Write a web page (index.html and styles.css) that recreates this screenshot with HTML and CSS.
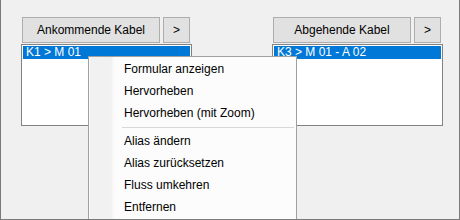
FILE: index.html
```html
<!DOCTYPE html>
<html lang="de">

<head>
    <meta charset="UTF-8" />
    <title>Kabel</title>
    <link rel="stylesheet" href="styles.css">
</head>

<body>
    <div class="fenster">
        <div class="spalten">
            <!-- Eingang -->
            <div class="spalte">
                <div class="kopf">
                    <button class="btn btn-titel">Ankommende Kabel</button>
                    <button class="btn btn-pfeil">&gt;</button>
                </div>
                <div class="liste">
                    <div class="eintrag ausgewaehlt">K1 &gt; M 01</div>
                </div>
            </div>

            <!-- Ausgang -->
            <div class="spalte">
                <div class="kopf">
                    <button class="btn btn-titel">Abgehende Kabel</button>
                    <button class="btn btn-pfeil">&gt;</button>
                </div>
                <div class="liste">
                    <div class="eintrag ausgewaehlt">K3 &gt; M 01 - A 02</div>
                </div>
            </div>
        </div>

        <!-- Kontextmenü -->
        <div class="menue">
            <div class="menue-punkt">Formular anzeigen</div>
            <div class="menue-punkt">Hervorheben</div>
            <div class="menue-punkt">Hervorheben (mit Zoom)</div>
            <div class="menue-trenner"></div>
            <div class="menue-punkt">Alias ändern</div>
            <div class="menue-punkt">Alias zurücksetzen</div>
            <div class="menue-punkt">Fluss umkehren</div>
            <div class="menue-punkt">Entfernen</div>
        </div>
    </div>
</body>

</html>
```

FILE: styles.css
```css
html,
body {
    margin: 0;
    padding: 0;
}

body {
    font-family: "Liberation Sans", Arial, sans-serif;
    font-size: 12px;
    color: #000;
}

.fenster {
    position: relative;
    box-sizing: border-box;
    width: 460px;
    height: 220px;
    background: #f0f0f0;
    border: 1px solid #7a7a7a;
    border-top: none;
    overflow: hidden;
}

.spalten {
    display: flex;
    gap: 80px;
    padding: 17px 0 0 20px;
}

.spalte {
    width: 171px;
}

.kopf {
    display: flex;
    gap: 3px;
    padding-left: 1px;
    margin-bottom: 1px;
}

.btn {
    box-sizing: border-box;
    height: 26px;
    background: #e1e1e1;
    border: 1px solid #adadad;
    font-family: inherit;
    font-size: 12px;
    color: #000;
    padding: 0;
}

.btn-titel {
    width: 138px;
}

.btn-pfeil {
    width: 27px;
}

.liste {
    box-sizing: border-box;
    height: 82px;
    background: #fff;
    border: 1px solid #828282;
    padding: 1px;
}

.eintrag {
    height: 13px;
    line-height: 13px;
    padding-left: 3px;
    white-space: nowrap;
}

.ausgewaehlt {
    background: #0078d7;
    color: #fff;
}

/* Kontextmenü liegt über den Listen */
.menue {
    position: absolute;
    left: 87px;
    top: 56px;
    width: 209px;
    box-sizing: border-box;
    border: 1px solid #a0a0a0;
    padding: 1px 0 2px 0;
    background: linear-gradient(to right, #fbfbfb 0, #fbfbfb 1px, #f1f1f1 1px, #f1f1f1 22px, #f7f7f7 24px, #fcfcfc 25px);
}

.menue-punkt {
    height: 22px;
    line-height: 22px;
    padding-left: 35px;
    white-space: nowrap;
}

.menue-trenner {
    height: 1px;
    background: #d7d7d7;
    margin: 3px 2px 2px 33px;
}
```
